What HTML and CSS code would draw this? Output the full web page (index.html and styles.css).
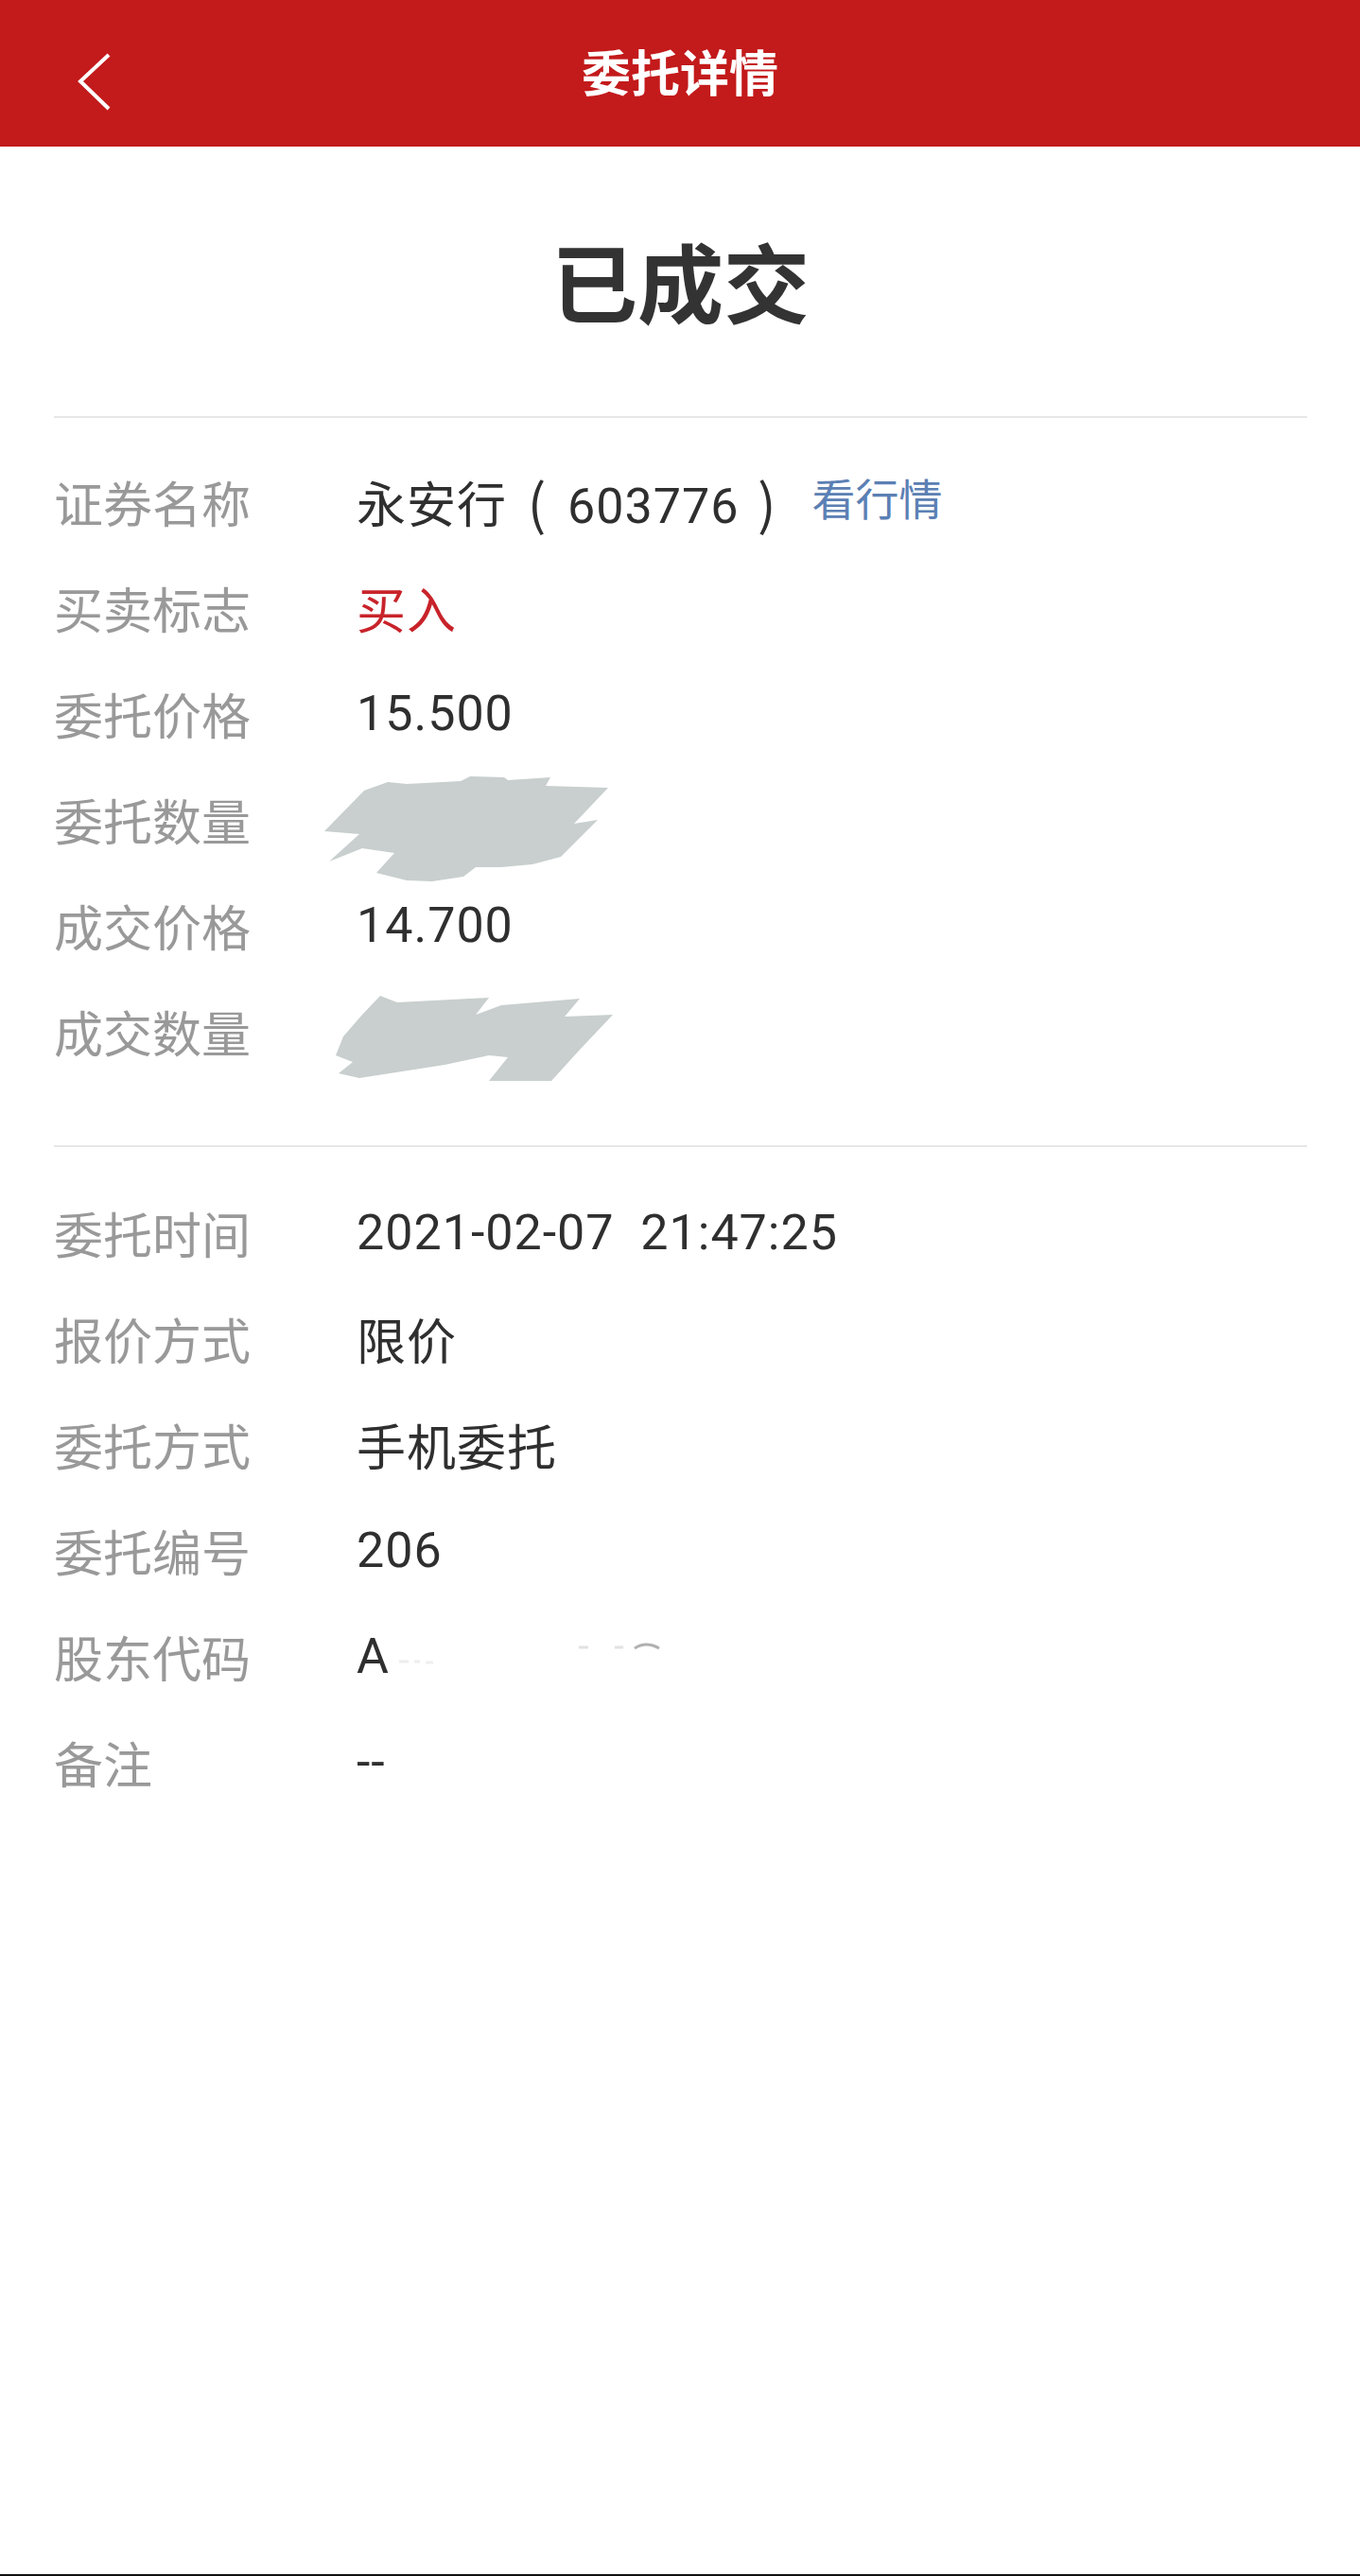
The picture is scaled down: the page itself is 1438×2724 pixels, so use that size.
FILE: index.html
```html
<!DOCTYPE html>
<html lang="zh-CN">
<head>
    <meta charset="UTF-8">
    <meta name="viewport" content="width=device-width, initial-scale=1.0">
    <title>委托详情</title>
    <link rel="stylesheet" href="styles.css">
</head>
<body>
    <div class="page">
        <header class="topbar">
            <a class="back" href="#">
                <svg width="40" height="64" viewBox="0 0 40 64">
                    <polyline points="35,3 5,31 35,60" fill="none" stroke="#fff" stroke-width="4"/>
                </svg>
            </a>
            <h1>委托详情</h1>
        </header>

        <div class="status">已成交</div>

        <div class="section first">
            <div class="row">
                <span class="label">证券名称</span>
                <span class="value">永安行<span class="paren">(</span>603776<span class="paren">)</span></span>
                <a class="quote" href="#">看行情</a>
            </div>
            <div class="row">
                <span class="label">买卖标志</span>
                <span class="value buy">买入</span>
            </div>
            <div class="row">
                <span class="label">委托价格</span>
                <span class="value">15.500</span>
            </div>
            <div class="row">
                <span class="label">委托数量</span>
                <span class="value masked">
                    <!-- 打码 -->
                    <svg class="blot blot-a" width="300" height="112" viewBox="0 0 300 112">
                        <polygon fill="#c8cfce" points="0,58 42,15 67,6 87,8 144,5 154,0 190,1 194,4 239,1 234,10 300,12 264,50 289,46 250,85 220,93 187,96 160,96 147,106 114,111 87,110 55,102 74,81 40,76 5,90 37,61"/>
                    </svg>
                </span>
            </div>
            <div class="row">
                <span class="label">成交价格</span>
                <span class="value">14.700</span>
            </div>
            <div class="row">
                <span class="label">成交数量</span>
                <span class="value masked">
                    <svg class="blot blot-b" width="295" height="92" viewBox="0 0 295 92">
                        <polygon fill="#c8cfce" points="47,0 65,7 162,2 148,20 175,10 258,3 242,22 293,20 258,57 228,90 162,90 182,65 162,63 115,73 25,87 3,82 18,70 0,63 8,43 28,20"/>
                    </svg>
                </span>
            </div>
        </div>

        <div class="section">
            <div class="row">
                <span class="label">委托时间</span>
                <span class="value">2021-02-07&nbsp;&nbsp;21:47:25</span>
            </div>
            <div class="row">
                <span class="label">报价方式</span>
                <span class="value">限价</span>
            </div>
            <div class="row">
                <span class="label">委托方式</span>
                <span class="value">手机委托</span>
            </div>
            <div class="row">
                <span class="label">委托编号</span>
                <span class="value">206</span>
            </div>
            <div class="row">
                <span class="label">股东代码</span>
                <span class="value">A<svg class="smudge" width="290" height="40" viewBox="0 0 290 40">
                        <!-- 擦掉后剩下的一点残迹 -->
                        <path d="M10 22 h10 M26 22 h6 M38 23 h8" stroke="#eeeeee" stroke-width="3"/>
                        <path d="M200 7 h10 M238 7 h9" stroke="#e2e2e2" stroke-width="3"/>
                        <path d="M259 8 q12 -8 26 0" fill="none" stroke="#b0b0b0" stroke-width="3"/>
                    </svg></span>
            </div>
            <div class="row">
                <span class="label">备注</span>
                <span class="value">--</span>
            </div>
        </div>

        <div class="spacer"></div>
        <div class="home-line"></div>
    </div>
</body>
</html>
```

FILE: styles.css
```css
body {
    margin: 0;
    font-family: Roboto, "Noto Sans CJK SC", sans-serif;
    background: #fff;
    color: #333;
}
.page {
    display: flex;
    flex-direction: column;
    min-height: 100vh;
}
.topbar {
    height: 155px;
    background-color: #c31a1b;
    display: flex;
    align-items: center;
    justify-content: center;
    position: relative;
}
.topbar h1 {
    margin: 0;
    padding-top: 4px;
    color: #fff;
    font-size: 52px;
    font-weight: bold;
    line-height: 1;
}
.back {
    position: absolute;
    left: 80px;
    top: 55px;
    display: block;
    height: 64px;
}
.status {
    margin: 0 56px 0 57px;
    padding: 95px 0 82px;
    text-align: center;
    font-size: 91px;
    font-weight: bold;
    line-height: 108px;
    color: #333;
    border-bottom: 2px solid #e6e6e6;
}
.section {
    margin: 0 56px 0 57px;
    padding: 34px 0 62px;
}
.section.first {
    padding-top: 32px;
    padding-bottom: 65px;
    border-bottom: 2px solid #e6e6e6;
}
.row {
    display: flex;
    align-items: center;
    height: 112px;
}
.label {
    width: 320px;
    flex-shrink: 0;
    font-size: 52px;
    color: #999;
}
.value {
    font-size: 52px;
    letter-spacing: 1px;
    color: #2f2f2f;
    white-space: nowrap;
}
.value.buy {
    color: #c8232a;
}
.paren {
    display: inline-block;
    width: 60px;
    text-align: center;
    font-family: "Noto Sans CJK SC", sans-serif;
    font-size: 58px;
    line-height: 1;
    vertical-align: -2px;
}
.paren:first-child {
    width: 64px;
}
.quote {
    margin-left: 17px;
    margin-bottom: 10px;
    font-size: 46px;
    color: #5b80b4;
    text-decoration: none;
}
.masked {
    position: relative;
    align-self: stretch;
}
.blot {
    position: absolute;
    display: block;
}
.blot-a {
    left: -34px;
    top: 11px;
}
.blot-b {
    left: -22px;
    top: 19px;
}
.smudge {
    vertical-align: middle;
}
.spacer {
    flex: 1;
}
.home-line {
    height: 2px;
    background: #111;
}
```
